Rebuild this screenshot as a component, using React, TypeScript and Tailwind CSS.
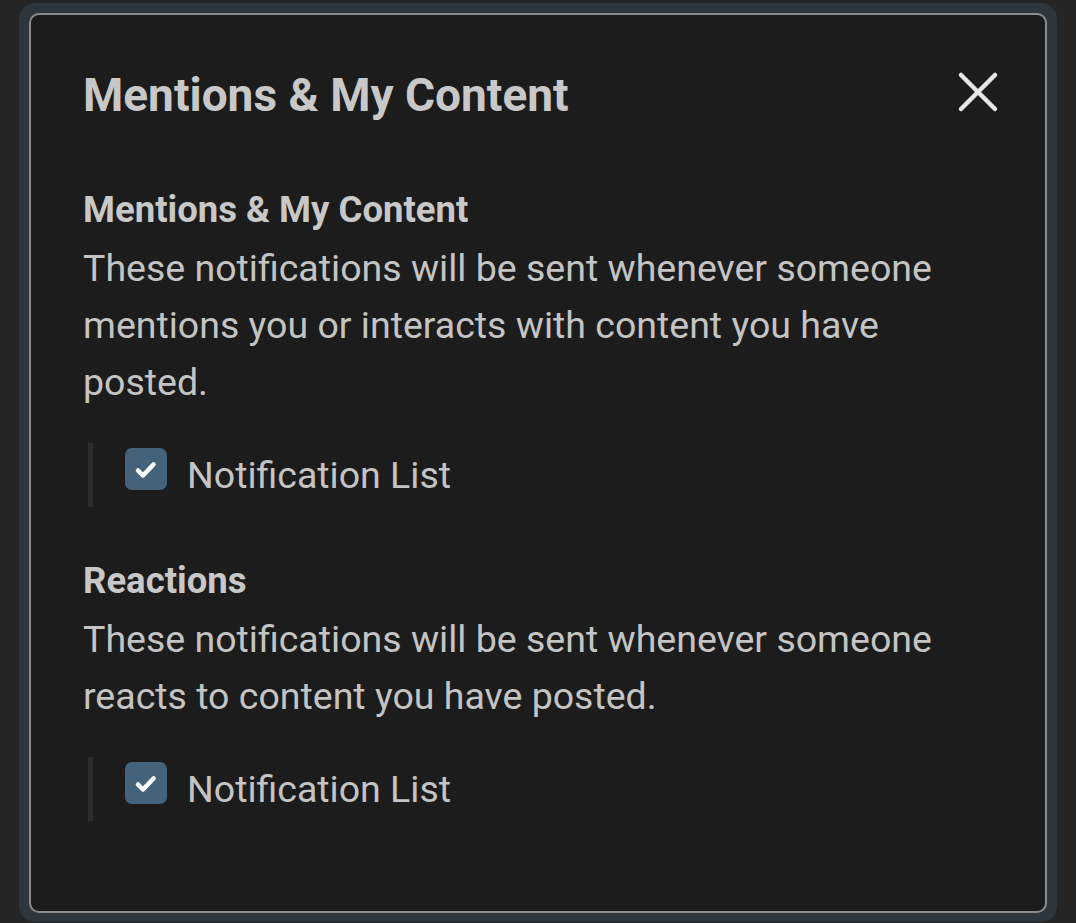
import React from "react";

function Check() {
  return (
    <div className="w-[42px] h-[42px] rounded-[7px] bg-[#44637b] shrink-0 mt-[5px]">
      <svg width="42" height="42" viewBox="0 0 42 42" fill="none">
        <path d="M13 22.5l5 5L28.5 16.5" stroke="#ffffff" strokeWidth="4.5" strokeLinecap="round" strokeLinejoin="round" />
      </svg>
    </div>
  );
}

function Section({ title, body }: { title: string; body: string }) {
  return (
    <div className="w-[900px]">
      <div className="text-[36.5px] leading-[44px] font-bold text-[#c8c8c8]">{title}</div>
      <p className="text-[37.5px] leading-[57px] text-[#c4c4c4] mt-[8px]">{body}</p>
      <div className="flex items-start mt-[32px] ml-[5px] border-l-[5px] border-[#2c2c2c] h-[64px] pl-[32px]">
        <Check />
        <span className="ml-[20px] text-[37.5px] leading-[64px] text-[#c4c4c4]">Notification List</span>
      </div>
    </div>
  );
}

export default function App() {
  return (
    <div className="w-[1076px] h-[923px] bg-[#252525] overflow-hidden pt-[3px] px-[19px]" style={{ fontFamily: "Roboto, 'Noto Sans', sans-serif" }}>
      <div className="bg-[#2c363c] rounded-[16px] p-[10px] pb-[9px] h-[919px]">
        <div className="border-2 border-[#8b8b8b] rounded-[10px] bg-[#1c1c1c] h-[900px] pl-[52px] pr-[40px] pt-[52px]">
          <div className="flex items-start justify-between">
            <h1 className="text-[46px] leading-[56px] font-bold text-[#c8c8c8]">Mentions &amp; My Content</h1>
            <svg width="42" height="42" viewBox="0 0 42 42" className="mt-[4px] mr-[6px]">
              <path d="M4 4L38 38M38 4L4 38" stroke="#e6e6e6" strokeWidth="4.5" strokeLinecap="round" />
            </svg>
          </div>
          <div className="mt-[65px]">
            <Section title="Mentions & My Content" body="These notifications will be sent whenever someone mentions you or interacts with content you have posted." />
          </div>
          <div className="mt-[52px]">
            <Section title="Reactions" body="These notifications will be sent whenever someone reacts to content you have posted." />
          </div>
        </div>
      </div>
    </div>
  );
}
